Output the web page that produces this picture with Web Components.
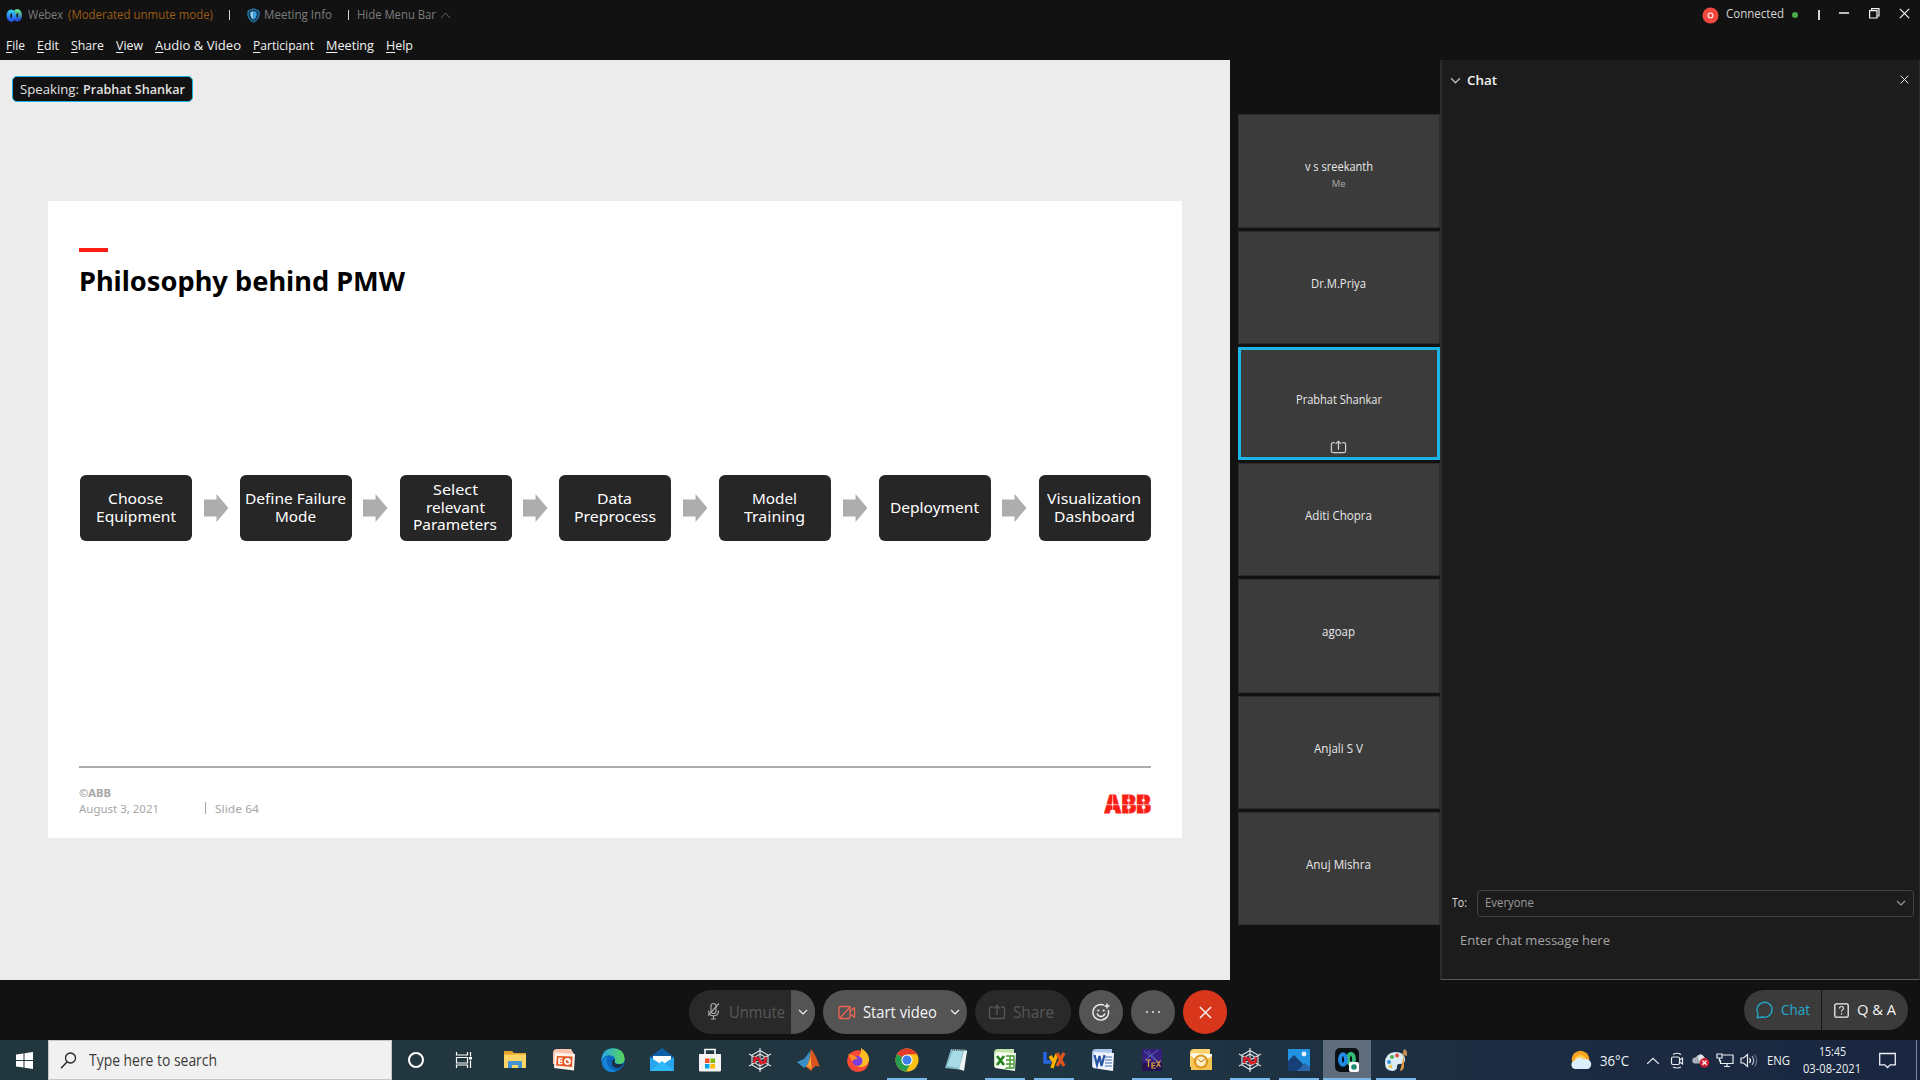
<!DOCTYPE html>
<html lang="en">
<head>
<meta charset="utf-8">
<title>Webex</title>
<style>
html,body{margin:0;height:100%;overflow:hidden;background:#121212}
body{font-family:"Open Sans","Noto Sans",sans-serif;color:#e6e6e6}
</style>
</head>
<body>
<meeting-app></meeting-app>
<script>
const define=(name,html,setup)=>{
  const t=document.createElement('template');t.innerHTML=html;
  customElements.define(name,class extends HTMLElement{
    constructor(){super();this.attachShadow({mode:'open'})}
    connectedCallback(){
      if(this.ready)return;this.ready=true;
      this.shadowRoot.append(document.importNode(t.content,true));
      if(setup)setup.call(this,this.shadowRoot);
    }
  });
};

/* single line of text condensed or widened to a given measure */
define('ui-text',`<style>:host{display:block;flex:none;white-space:nowrap;line-height:1.36}span{display:inline-block;transform-origin:0 50%}</style><span><slot></slot></span>`,function(r){
  const w=+this.getAttribute('w'),s=r.querySelector('span');
  if(w){const n=s.getBoundingClientRect().width;this.style.width=w+'px';if(n)s.style.transform='scaleX('+(w/n)+')';}
});

const icons={
webex:[17,17,'0 0 17 17',`<defs><linearGradient id="a" x1="0" x2="0" y1="0" y2="1"><stop stop-color="#35c4f0"/><stop offset="1" stop-color="#2458e8"/></linearGradient><linearGradient id="b" x1="0" x2="0" y1="0" y2="1"><stop stop-color="#5fdc86"/><stop offset="1" stop-color="#244fd8"/></linearGradient></defs><ellipse cx="11.300" cy="8.300" rx="2.800" ry="4.300" fill="none" stroke="url(#b)" stroke-width="3.900"/><ellipse cx="5.300" cy="8.700" rx="2.800" ry="4.300" fill="none" stroke="url(#a)" stroke-width="3.900"/>`],
shield:[13,15,'0 0 13 15',`<path d="M6.500.8 12 3v5q-1 4-5.500 6.200Q2 12 1 8V3z" fill="#16384f" stroke="#2793d8"/><path d="M6.500 3v8.800Q4 10.500 3.400 7.600V4.300z" fill="#8ed0f4"/><path d="M6.500 3v8.800Q9 10.500 9.600 7.600V4.300z" fill="#3aa5e4"/>`],
up:[12,8,'0 0 12 8',`<path d="m1 7 5-5 5 5" fill="none" stroke="currentColor"/>`],
down:[10,8,'0 0 10 8',`<path d="m1 2 4 4 4-4" fill="none" stroke="currentColor" stroke-width="1.2"/>`],
x:[11,11,'0 0 11 11',`<path d="m.8.8 9.400 9.400M10.200.8.8 10.200" stroke="currentColor" stroke-width="1.2"/>`],
restore:[11,11,'0 0 11 11',`<path d="M.6 2.600h7.400v7.400H.6zM2.600 2.600V.6h7.400V8H8" fill="none" stroke="#f2f2f2" stroke-width="1.200"/>`],
rec:[17,17,'0 0 17 17',`<circle cx="8.500" cy="8.500" r="8" fill="#f0473e"/><circle cx="8.500" cy="8.500" r="2.400" fill="none" stroke="#ffe0dc" stroke-width="1.300"/>`],
share:[18,16,'0 0 18 16',`<path d="M5 3H3.500Q1.500 3 1.500 5v7.500q0 2 2 2h11q2 0 2-2V5q0-2-2-2H13M9 11V1.500M6 4.500l3-3 3 3" fill="none" stroke="currentColor" stroke-width="1.300"/>`],
mic:[13,18,'0 0 13 18',`<g fill="none" stroke="#a7a7a7" stroke-width="1.200"><rect x="4" y="1.500" width="5" height="10" rx="2.500"/><path d="M1.500 8.500q0 5.300 5 5.300t5-5.300M6.500 14v3M4 17h5M12 1.500 1 13.500"/></g>`],
cam:[18,15,'0 0 18 15',`<g fill="none" stroke="#f0654f" stroke-width="1.300"><rect x="1" y="1.500" width="11" height="12" rx="1.500"/><path d="m12 6 4.500-3v9L12 9M1.500 13.500l11-12"/></g>`],
smile:[20,20,'0 0 20 20',`<g fill="none" stroke="#eee" stroke-width="1.400"><path d="M13 3.200A7.800 7.800 0 1 0 17.200 8"/><path d="M6 11.500q1.200 3 4 3t4-3M16 1.500v5M13.500 4h5"/></g><circle cx="7.300" cy="8.500" r="1.100" fill="#eee"/><circle cx="12.700" cy="8.500" r="1.100" fill="#eee"/>`],
dots:[18,4,'0 0 18 4',`<g fill="#ddd"><circle cx="3" cy="2" r="1.100"/><circle cx="9" cy="2" r="1.100"/><circle cx="15" cy="2" r="1.100"/></g>`],
bubble:[18,18,'0 0 18 18',`<path d="M2 12.500A7.500 7.500 0 1 1 6.500 16L1.300 16.700z" fill="none" stroke="#22aad0" stroke-width="1.300"/>`],
qa:[15,15,'0 0 15 15',`<rect x=".8" y=".8" width="13.400" height="13.400" rx="1.500" fill="none" stroke="#f2f2f2" stroke-width="1.300"/><path d="M5.500 5.500q0-2 2-2t2 1.800q0 1-1 1.600t-1 1.800M7.500 10v1.500" fill="none" stroke="#eee" stroke-width="1.100"/>`],
win:[17,17,'0 0 17 17',`<path d="M0 2.500 7.500 1.500V8H0zM8.500 1.300 17 0v8H8.500zM0 9h7.500v6.500L0 14.500zM8.500 9H17v8l-8.500-1.300z" fill="#fff"/>`],
search:[17,17,'0 0 17 17',`<circle cx="10.500" cy="6" r="5" fill="none" stroke="#222" stroke-width="1.300"/><path d="M7 10 1 16.300" stroke="#222" stroke-width="1.400"/>`],
cortana:[24,24,'0 0 24 24',`<circle cx="12" cy="12" r="7" fill="none" stroke="#fff" stroke-width="2"/>`],
task:[24,24,'0 0 24 24',`<g fill="none" stroke="#fff" stroke-width="1.200"><path d="M4.500 4v3h11V4M4.500 20v-3h11v3M4.500 9.500h11v5.500h-11zM18.500 4v4.500M18.500 12.500V20"/></g><path d="M17 9h3v2.500h-3z" fill="#fff"/>`],
folder:[24,24,'0 0 24 24',`<path d="M1 3h8l2 2h12v15H1z" fill="#e2a52a"/><path d="M1 6.500h22V20H1z" fill="#ffd566"/><path d="M5 20v-6q0-1 1-1h12q1 0 1 1v6h-4v-3H9v3z" fill="#4193d4"/>`],
ppt:[24,24,'0 0 24 24',`<path d="M5 1h14l3 5H4v10H1V5q0-4 4-4z" fill="#f7c4ad"/><path d="M3 4.500 23 6l-1 16.500L2 20z" fill="#fff2eb"/><path d="M5 8 20.500 8.500 20 19 4 17.500z" fill="#e85420"/><g fill="none" stroke="#fff" stroke-width="1.600"><path d="M10.500 10.500H7v5h3.500M7 13h3.500"/><circle cx="15.500" cy="13.500" r="2.600"/></g><path d="M15.500 11h2.500v2.500h-2.500z" fill="#fff"/>`],
edge:[24,24,'0 0 24 24',`<defs><linearGradient id="e"><stop stop-color="#2aa5e8"/><stop offset="1" stop-color="#55d857"/></linearGradient></defs><circle cx="12" cy="12" r="11.700" fill="#0c65bd"/><path d="M.4 11Q2 .3 12 .3q11 0 11.700 10.500 0 5.200-6 5.200-4.700 0-3.700-3 1-4.500-4-5.500Q3.500 6.500.4 13z" fill="url(#e)"/><path d="M14 12q-1.800 4.400 4.500 4.300 3 0 4.300-1-2.300 4.200-6.300 4.600-6.500-.1-5.500-5.900Q12 10 14 12z" fill="#1c2f46"/><path d="M7.500 9q-4 4 .5 10 2.500 3.300 8 3.700-9 4-14-4Q-1 10 7.500 9z" fill="#1683d7"/>`],
mail:[24,24,'0 0 24 24',`<path d="M0 9 12 0l12 9v4H0z" fill="#0d5fa8"/><path d="M3 8h18v8H3z" fill="#fff"/><path d="M0 9v14h24V9L12 17z" fill="#28a5ef"/><path d="M0 23 12 13 24 23z" fill="#2fb8f6"/>`],
store:[24,24,'0 0 24 24',`<path d="M7 8V1.500h10V8" fill="none" stroke="#fff" stroke-width="1.600"/><path d="M1 6h22v16.500q0 1-1 1H2q-1 0-1-1z" fill="#f4f4f4"/><path d="M7 10.500h4.500V15H7z" fill="#ef4f22"/><path d="M12.500 10.500H17V15h-4.500z" fill="#7fba00"/><path d="M7 16h4.500v4.500H7z" fill="#00a4ef"/><path d="M12.500 16H17v4.500h-4.500z" fill="#ffb900"/>`],
spider:[24,24,'0 0 24 24',`<g fill="none" stroke="#dfe3e5" stroke-width="1.100"><path d="M12 0v24M1 6l22 12M23 6 1 18M12 2.500 20 7v10l-8 4.500L4 17V7zM12 6l5 3v6l-5 3-5-3V9z"/></g><path d="m6 15 1-5 4 1 2 4 4-1 1-5" fill="none" stroke="#d51f28" stroke-width="2.800"/>`],
matlab:[24,24,'0 0 24 24',`<path d="m0 14 7-3 7-9-3 15-4 3z" fill="#3b8fc7"/><path d="M14 1q3 2 9 18-5-3-9 4l-5-4q4-4 5-18z" fill="#d9541e"/><path d="M14 1q-1 8 1 21-4-4-6-3 4-5 5-18z" fill="#f5a13a"/>`],
firefox:[24,24,'0 0 24 24',`<circle cx="12" cy="13" r="10.800" fill="#fa4a35"/><path d="M15 0q8 5 8.200 12-2 7-8.200 7-6 0-7-5-4-2-4-7 5 1 7 2 5-2 4-9z" fill="#ffbd25"/><circle cx="11.500" cy="13" r="5" fill="#7a3de0"/><path d="M2 6q7 1 10 5-4 0-6 2z" fill="#ff8b22"/>`],
chrome:[24,24,'0 0 24 24',`<circle cx="12" cy="12" r="11.500" fill="#fbc116"/><path d="M12 12 2 6.300A11.500 11.500 0 0 1 22 6.300H12z" fill="#e33b2e"/><path d="M12 12 2 6.300a11.500 11.500 0 0 0 9 17.200l5-9z" fill="#249d4f"/><circle cx="12" cy="12" r="5.600" fill="#fff"/><circle cx="12" cy="12" r="4.500" fill="#3d7ee8"/>`],
note:[24,24,'0 0 24 24',`<path d="m7 1 16 1-4 20L1 20z" fill="#80b9c6"/><path d="m9 2 10 1-4 17-12-2z" fill="#a9dbe4"/><path d="m20 3 3 0-3 20-5-2z" fill="#eef3f4"/><path d="M8 2h13" stroke="#6c7478" stroke-dasharray="1 1" stroke-width="2"/>`],
excel:[24,24,'0 0 24 24',`<path d="M5 1h16v18H1V5q0-4 4-4z" fill="#bfe2a6"/><path d="m3 4 20 1-1 18-20-3z" fill="#f3faee"/><path d="M13 8h8v12h-9M13 12h8M13 16h8M17 8v12" fill="none" stroke="#4a9a32" stroke-width="1.400"/><path d="M2 6.500 13 6v14L3 18z" fill="#fff"/><path d="m4 8 7 9M11 8l-7 9" stroke="#28861f" stroke-width="2.800"/>`],
lyx:[24,24,'0 0 24 24',`<g fill="none" stroke-width="3.400"><path d="M3 4v10h6" stroke="#2665df"/><path d="m8 8 4 6 3-8M12 14l-2 6" stroke="#ffb400"/><path d="m15 5 7 13M22 5l-7 13" stroke="#e2551a"/></g>`],
word:[24,24,'0 0 24 24',`<path d="M5 1h16v18H1V5q0-4 4-4z" fill="#adc8ec"/><path d="m3 4 20 1-1 18-20-3z" fill="#f2f6fc"/><path d="M14 9h7M14 12h7M14 15h7M14 18h7" stroke="#3e6bb5"/><path d="m3.500 7 2.500 10L8.500 8l2 10L13.500 7" fill="none" stroke="#2553a4" stroke-width="2.200"/>`],
tex:[24,24,'0 0 24 24',`<path d="M2 1h20v22H2z" fill="#37207c"/><path d="M2 15h20v8H2z" fill="#251354"/><path d="m4 3 15 12M8 3l8 9M18 2 5 12" stroke="#6277dc" stroke-width=".8"/><g fill="none" stroke="#e5a43e" stroke-width="1.200"><path d="M6 12h5M8.500 12v7M15.500 15h-3.500v5h3.500M12 17.500h3M16.500 12.500l4 6.500M20.500 12.500l-4 6.500"/></g>`],
outlook:[24,24,'0 0 24 24',`<path d="M5 1h16v18H1V5q0-4 4-4z" fill="#fbd36c"/><path d="m2 5 21 1v16H2z" fill="#fffaf0"/><path d="m2 8 10 7 11-7v14H2z" fill="#f6c453"/><circle cx="12" cy="13.500" r="6" fill="#fff0c8" stroke="#dd961d" stroke-width="2.200"/><path d="m9 11 3 3 4-3" fill="none" stroke="#bd7811"/>`],
photos:[24,24,'0 0 24 24',`<path d="M1 1h22v22H1z" fill="#2192df"/><path d="m1 13 6-6 16 16H1z" fill="#174079"/><path d="m10 23 8-8 5 4v4z" fill="#2c67aa"/><circle cx="17" cy="6" r="2.400" fill="#eaf5ff"/>`],
webexapp:[24,24,'0 0 24 24',`<rect width="24" height="24" rx="5" fill="#0a1013"/><ellipse cx="16" cy="11" rx="3" ry="5.300" fill="none" stroke="#32bd78" stroke-width="3.800"/><ellipse cx="8" cy="11.500" rx="3" ry="5.300" fill="none" stroke="#218be6" stroke-width="3.800"/><rect x="14" y="14" width="10" height="10" rx="2" fill="#fff"/><circle cx="19" cy="19" r="2.800" fill="#1a8f72"/>`],
paint:[24,24,'0 0 24 24',`<path d="M1 15Q1 5 11 4q10 0 10 8 0 4-6 4-2 0-2 3t-4 4Q1 23 1 15z" fill="#dcecf6"/><circle cx="5" cy="14" r="2" fill="#3b91d8"/><circle cx="8" cy="9" r="2" fill="#4eaf4d"/><circle cx="13" cy="7.500" r="2" fill="#dd5146"/><circle cx="6.500" cy="18.500" r="1.800" fill="#edc340"/><path d="m20 7-4 16q3 0 4-4z" fill="#dd9641"/><path d="m18 7 2-6q4 1 3 7z" fill="#bc8957"/>`],
weather:[22,20,'0 0 22 20',`<circle cx="10.500" cy="9.500" r="8.800" fill="#f8a422"/><circle cx="10.500" cy="11" r="6" fill="#ffcc50"/><path d="M5 19a4.200 4.200 0 0 1-.5-8.200A6 6 0 0 1 14 9.500a5 5 0 0 1 4 9.500z" fill="#dceffc"/>`],
meet:[14,17,'0 0 14 17',`<g fill="none" stroke="#e9edf2" stroke-width="1.200"><rect x="1.500" y="5" width="8" height="7.500" rx="1.500"/><path d="m9.500 8 3-2v6l-3-2M3 2.500Q7 0 11 2.500M3 15q4 2 8 0"/></g>`],
cloud:[18,15,'0 0 18 15',`<path d="M3 10.500a3 3 0 0 1 .5-6 5 5 0 0 1 9 0 3.500 3.500 0 0 1 1 6z" fill="#a8b0ba"/><path d="M6 3q3-4 6.500 1.500L7 8z" fill="#e4e7ea"/><circle cx="12.500" cy="9.800" r="4.800" fill="#cf2133"/><path d="m10.500 7.800 4 4m0-4-4 4" stroke="#fff" stroke-width="1.300"/>`],
net:[18,15,'0 0 18 15',`<g fill="none" stroke="#e9edf2" stroke-width="1.200"><path d="M6.500 2H17v8.500H4.500V7M8 13.500h6M11 10.500v3"/><path d="M1 1h5v4H1zM3.500 5v3.500"/></g>`],
sound:[18,15,'0 0 18 15',`<g fill="none" stroke="#e9edf2" stroke-width="1.200"><path d="M1 5h2.500L7.500 1.500v12L3.500 10H1zM9.500 5q2 2.500 0 5"/><path d="M12 3q3.500 4.500 0 9" stroke="#aab4c4"/><path d="M14.500 1.500q4.500 6 0 12" stroke="#66748a"/></g>`],
action:[17,17,'0 0 17 17',`<path d="M.7 1.500h15.600v11.300h-5.100l-2.700 2.700-2.700-2.700H.7z" fill="none" stroke="#eef1f5" stroke-width="1.300"/>`]
};
define('ui-icon','<style>:host{display:block;flex:none}svg{display:block;width:100%;height:100%}</style>',function(r){
  const [w,h,v,b]=icons[this.getAttribute('name')];
  this.style.width=(this.getAttribute('w')||w)+'px';this.style.height=(this.getAttribute('h')||h)+'px';
  const d=document.createElement('div');d.style.height='100%';d.innerHTML=`<svg viewBox="${v}" preserveAspectRatio="none">${b}</svg>`;r.append(d);
});

define('title-bar',`<style>
:host{display:flex;flex:none;height:30px;align-items:center;font-size:12px;color:#7d7d7d}
i{width:1px;height:10px;background:#d5d5d5;flex:none}
.m{color:#9a5c14;margin-left:5px}.sp{flex:1}
.dot{width:6px;height:6px;border-radius:50%;background:#4aa84a;margin-left:8px}
</style>
<ui-icon name="webex" style="margin-left:6px"></ui-icon><ui-text w="35" style="margin-left:5px">Webex</ui-text>
<ui-text w="145" class="m">(Moderated unmute mode)</ui-text><i style="margin-left:16px"></i>
<ui-icon name="shield" style="margin-left:17px"></ui-icon><ui-text w="68" style="margin-left:4px">Meeting Info</ui-text>
<i style="margin-left:16px"></i><ui-text w="79" style="margin-left:8px">Hide Menu Bar</ui-text><ui-icon name="up" w="11" h="8" style="margin-left:4px;color:#666"></ui-icon>
<div class="sp"></div>
<ui-icon name="rec"></ui-icon><ui-text w="58" style="margin-left:7px;color:#d6d6d6;margin-top:-2px">Connected</ui-text><div class="dot"></div>
<i style="margin-left:20px;width:2px"></i><i style="width:10px;height:1.500px;margin:-4px 0 0 19px;background:#bbb"></i>
<ui-icon name="restore" style="margin:-4px 0 0 20px"></ui-icon><ui-icon name="x" style="margin:-4px 10.500px 0 19px;color:#f2f2f2"></ui-icon>`);

define('menu-bar',`<style>:host{display:flex;flex:none;height:30px;align-items:center;gap:12px;padding:2px 0 0 6px;box-sizing:border-box;font-size:13px;color:#f2f2f2}u{text-underline-offset:2px;text-decoration-thickness:1px}</style>
<ui-text w="19"><u>F</u>ile</ui-text><ui-text w="22"><u>E</u>dit</ui-text><ui-text w="33"><u>S</u>hare</ui-text><ui-text w="27"><u>V</u>iew</ui-text><ui-text w="86"><u>A</u>udio &amp; Video</ui-text><ui-text w="61"><u>P</u>articipant</ui-text><ui-text w="48"><u>M</u>eeting</ui-text><ui-text w="27"><u>H</u>elp</ui-text>`);

define('flow-step',`<style>:host{display:flex;flex-direction:column;justify-content:center;align-items:center;flex:none;width:112px;height:66px;border-radius:6px;background:#262626;color:#fff;font:14.500px/17.600px "Noto Sans",sans-serif;box-sizing:border-box;padding:0 1px 1px 0}::slotted(ui-text){line-height:17.600px!important}</style><slot></slot>`);
define('flow-arrow',`<style>:host{display:block;flex:none;width:24.500px;height:28px}svg{display:block}</style><svg width="24.500" height="28" viewBox="0 0 24.500 28"><path d="M0 5.500h12.500V0l12 14-12 14v-5.500H0z" fill="#adadad"/></svg>`);
define('abb-logo',`<style>:host{display:block;flex:none;width:56px;height:38px}svg{display:block;overflow:visible}</style><svg width="56" height="38" viewBox="-3 -10 56 38"><text x="0" y="18.200" textLength="47" lengthAdjust="spacingAndGlyphs" font-family="Inter" font-weight="900" font-size="24.500" fill="#fa1e14" stroke="#fa1e14" stroke-width=".8">ABB</text><path d="M0 9.700h48M8.700 0v19M24.800 0v19M39.800 0v19" stroke="#fff" stroke-opacity=".7" stroke-width=".9"/></svg>`);

define('shared-slide',`<style>
:host{display:flex;flex-direction:column;width:1134px;height:637px;background:#fff;box-sizing:border-box;padding:47px 31px 0;color:#000;font-family:"Noto Sans",sans-serif}
.bar{width:28.500px;height:4px;background:#fa1e14;flex:none}
.title{font-size:27px;font-weight:700;margin:10px 0 0;line-height:38px}
.flow{display:flex;align-items:center;justify-content:space-between;height:66px;margin:175px .5px 0 1px;flex:none}
.foot{margin-top:225px;border-top:2px solid #adadad;display:flex;justify-content:space-between;color:#a6a6a6;font-size:11px;padding-top:17px}
.foot ui-text{line-height:16px}
.line{display:flex;align-items:center}
i{width:1.200px;height:12px;background:#a6a6a6;margin:-2px 9px 0 46px}
</style>
<div class="bar"></div><ui-text class="title" w="326">Philosophy behind PMW</ui-text>
<div class="flow">
<flow-step><ui-text w="55">Choose</ui-text><ui-text w="80">Equipment</ui-text></flow-step><flow-arrow></flow-arrow>
<flow-step><ui-text w="101">Define Failure</ui-text><ui-text w="41">Mode</ui-text></flow-step><flow-arrow></flow-arrow>
<flow-step><ui-text w="45">Select</ui-text><ui-text w="59">relevant</ui-text><ui-text w="84">Parameters</ui-text></flow-step><flow-arrow></flow-arrow>
<flow-step><ui-text w="35">Data</ui-text><ui-text w="82">Preprocess</ui-text></flow-step><flow-arrow></flow-arrow>
<flow-step><ui-text w="45">Model</ui-text><ui-text w="61">Training</ui-text></flow-step><flow-arrow></flow-arrow>
<flow-step><ui-text w="89">Deployment</ui-text></flow-step><flow-arrow></flow-arrow>
<flow-step><ui-text w="94">Visualization</ui-text><ui-text w="81">Dashboard</ui-text></flow-step>
</div>
<div class="foot"><div><ui-text w="32" style="font-weight:700">©ABB</ui-text><div class="line"><ui-text w="80">August 3, 2021</ui-text><i></i><ui-text w="44">Slide 64</ui-text></div></div><abb-logo style="margin:0 -5.500px 0 0"></abb-logo></div>`);

define('share-stage',`<style>:host{display:flex;flex-direction:column;flex:none;width:1230px;background:#ececec;box-sizing:border-box;padding:16px 0 0}
.sp{display:flex;align-items:center;box-sizing:border-box;width:181px;height:26px;margin-left:12px;border:1.500px solid #1bb5e5;border-radius:5px;background:#121212;font-size:13px;padding:1.500px 0 0 7px;gap:4px;color:#e3e3e3}b{font-weight:600}
shared-slide{margin:99px 0 0 48px}</style>
<div class="sp"><ui-text w="59">Speaking:</ui-text><ui-text w="102"><b>Prabhat Shankar</b></ui-text></div><shared-slide></shared-slide>`);

define('person-tile',`<style>
:host{display:flex;flex-direction:column;align-items:center;box-sizing:border-box;width:202px;height:113.300px;border:1px solid #2c2c2c;background:#3b3b3b;font-size:12px;color:#e8e8e8;padding:44px .5px 0 0;flex:none}
:host([active]){border:3px solid #1bb5e5;padding-top:42px}
ui-icon{margin-top:32px;color:#d0d0d0}small{font-size:9.500px;color:#aaa;margin-top:1px}</style>`,function(r){
  const n=document.createElement('ui-text');n.setAttribute('w',this.getAttribute('w'));n.textContent=this.getAttribute('name');r.append(n);
  if(this.hasAttribute('me'))r.append(Object.assign(document.createElement('small'),{textContent:'Me'}));
  if(this.hasAttribute('active')){const i=document.createElement('ui-icon');i.setAttribute('name','share');i.setAttribute('w','17');i.setAttribute('h','14');r.append(i);}
});
define('people-strip',`<style>:host{display:flex;flex-direction:column;flex:none;width:210px;box-sizing:border-box;padding:54.300px 0 0 8px;gap:3px}</style>
<person-tile name="v s sreekanth" w="68" me></person-tile><person-tile name="Dr.M.Priya" w="55"></person-tile><person-tile name="Prabhat Shankar" w="86" active></person-tile><person-tile name="Aditi Chopra" w="67"></person-tile><person-tile name="agoap" w="33"></person-tile><person-tile name="Anjali S V" w="49"></person-tile><person-tile name="Anuj Mishra" w="65"></person-tile>`);

define('chat-panel',`<style>
:host{display:flex;flex-direction:column;flex:1;box-sizing:border-box;background:#1c1c1c;border-left:2px solid #2b2b2b;border-bottom:1px solid #5a5a5a;border-right:1px solid #2b2b2b}
.h{display:flex;align-items:center;height:40px;padding:0 10.500px 0 8px;color:#f4f4f4;font-size:13px;font-weight:600}.sp{flex:1}
.to{display:flex;align-items:center;font-size:12px;padding:0 5px 0 10px;color:#ddd}.to ui-text{margin-top:1px}
.sel{display:flex;flex:1;align-items:center;justify-content:space-between;height:27px;box-sizing:border-box;border:1px solid #444;border-radius:4px;margin-left:10px;padding:0 7px 0 7px;color:#9b9b9b}
.msg{font-size:13.500px;color:#a5a5a5;padding:14px 0 30px 18px}</style>
<div class="h"><ui-icon name="down" w="11" h="9" style="color:#bbb"></ui-icon><ui-text w="30" style="margin:1px 0 0 6px">Chat</ui-text><div class="sp"></div><ui-icon name="x" w="9" h="9" style="margin-top:-2px"></ui-icon></div>
<div class="sp"></div>
<div class="to"><ui-text w="15">To:</ui-text><div class="sel"><ui-text w="49">Everyone</ui-text><ui-icon name="down"></ui-icon></div></div>
<div class="msg"><ui-text w="150">Enter chat message here</ui-text></div>`);

define('tool-bar',`<style>
:host{display:flex;flex:none;height:60px;box-sizing:border-box;padding:10px 12px 0 689px;font-size:16.500px;align-items:flex-start}
.p{display:flex;align-items:center;height:44px;border-radius:22px;background:#545454;color:#f4f4f4;margin-right:8px;overflow:hidden;box-sizing:border-box;flex:none}
.off{background:#292929;color:#585858}.c{width:44px;justify-content:center}
.split{width:24px;height:44px;background:#545454;color:#eee;display:flex;align-items:center;justify-content:center;margin-left:6px}
.r{display:flex;margin-left:auto;height:40px;border-radius:20px;background:#3b3b3b;overflow:hidden;font-size:14.500px}
.r div{display:flex;align-items:center;box-sizing:border-box}
</style>
<div class="p off" style="width:126px;padding-left:18px"><ui-icon name="mic" style="margin-top:-2px"></ui-icon><ui-text w="56" style="margin-left:9px">Unmute</ui-text><div class="split"><ui-icon name="down"></ui-icon></div></div>
<div class="p" style="width:144px;padding-left:15px"><ui-icon name="cam"></ui-icon><ui-text w="74" style="margin-left:7px">Start video</ui-text><ui-icon name="down" style="margin-left:13px"></ui-icon></div>
<div class="p off" style="width:96px;padding-left:13px"><ui-icon name="share"></ui-icon><ui-text w="41" style="margin-left:7px">Share</ui-text></div>
<div class="p c"><ui-icon name="smile"></ui-icon></div><div class="p c"><ui-icon name="dots"></ui-icon></div><div class="p c" style="background:#d8371c"><ui-icon name="x" w="13" h="13"></ui-icon></div>
<div class="r"><div style="width:77.500px;padding-left:11.500px;border-right:1px solid #171717;color:#22aad0"><ui-icon name="bubble"></ui-icon><ui-text w="29" style="margin-left:7px">Chat</ui-text></div><div style="width:86.500px;padding-left:12.500px;color:#f4f4f4"><ui-icon name="qa"></ui-icon><ui-text w="39" style="margin-left:8px">Q &amp; A</ui-text></div></div>`);

define('task-item',`<style>:host{display:flex;flex:none;width:49px;height:40px;align-items:center;justify-content:center;box-sizing:border-box;background:linear-gradient(#7ab7ea,#7ab7ea) center bottom/0 2.500px no-repeat}
:host([run]){background-size:40px 2.500px}:host([on]){background-color:#606d7c;background-size:48px 2.500px;}</style>`,function(r){
  const i=document.createElement('ui-icon');i.setAttribute('name',this.getAttribute('icon'));r.append(i);
});
define('task-bar',`<style>
:host{display:flex;flex:none;height:40px;align-items:center;background:linear-gradient(90deg,#22363e,#22373f 30%,#1f3442 60%,#1b2a41 85%,#1a2641);color:#eef1f5;font-size:12.500px}
.s{display:flex;align-items:center;width:344px;height:40px;box-sizing:border-box;border:1px solid #c5c5c5;background:#f1f1f1;color:#3a3a3a;font-size:15.500px;padding-left:11px;margin-left:15px;flex:none}
.apps{display:flex}.tray{display:flex;align-items:center;margin-left:auto}
.clk{display:flex;flex-direction:column;align-items:center;margin-left:13px}.clk ui-text{line-height:17.500px}
i{width:1px;height:40px;background:#7f8a9a;margin:0 4px 0 20px}</style>
<ui-icon name="win" style="margin-left:15.500px;margin-right:.5px"></ui-icon>
<div class="s"><ui-icon name="search"></ui-icon><ui-text w="128" style="margin:2px 0 0 11.500px">Type here to search</ui-text></div>
<div class="apps"><task-item icon="cortana" style="width:48px"></task-item><task-item icon="task" style="width:48px"></task-item><task-item icon="folder" style="width:53px"></task-item><task-item icon="ppt" style="width:45px"></task-item><task-item icon="edge" style="width:53px"></task-item><task-item icon="mail" style="width:46px"></task-item><task-item icon="store" style="width:50px"></task-item><task-item icon="spider"></task-item><task-item icon="matlab"></task-item><task-item icon="firefox"></task-item><task-item icon="chrome" run></task-item><task-item icon="note"></task-item><task-item icon="excel" run></task-item><task-item icon="lyx" run></task-item><task-item icon="word"></task-item><task-item icon="tex" run></task-item><task-item icon="outlook"></task-item><task-item icon="spider" run></task-item><task-item icon="photos" run></task-item><task-item icon="webexapp" on style="width:48px"></task-item><task-item icon="paint" run></task-item></div>
<div class="tray"><ui-icon name="weather"></ui-icon><ui-text w="29" style="margin:2px 0 0 8px;font-size:14px">36°C</ui-text><ui-icon name="up" w="14" h="9" style="margin-left:17px"></ui-icon><ui-icon name="meet" style="margin-left:10px"></ui-icon><ui-icon name="cloud" style="margin-left:8px"></ui-icon><ui-icon name="net" style="margin-left:6px"></ui-icon><ui-icon name="sound" style="margin-left:6px"></ui-icon><ui-text w="23" style="margin-left:9px">ENG</ui-text>
<div class="clk"><ui-text w="27">15:45</ui-text><ui-text w="58">03-08-2021</ui-text></div><ui-icon name="action" style="margin-left:18px"></ui-icon><i style="margin-right:3px"></i></div>`);

define('meeting-app',`<style>:host{display:flex;flex-direction:column;width:1920px;height:1080px;background:#121212;overflow:hidden}main{display:flex;height:920px;flex:none}</style>
<title-bar></title-bar><menu-bar></menu-bar><main><share-stage></share-stage><people-strip></people-strip><chat-panel></chat-panel></main><tool-bar></tool-bar><task-bar></task-bar>`);
</script>
</body>
</html>
